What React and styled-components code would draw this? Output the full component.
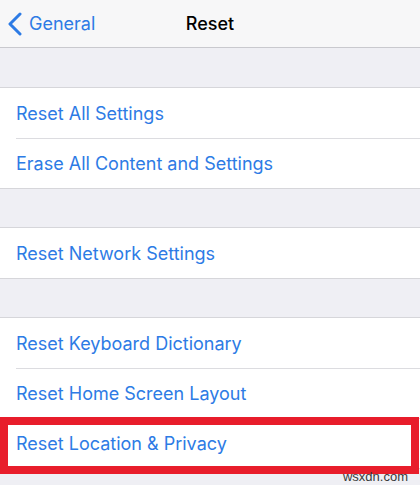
import React from "react";
import styled, { createGlobalStyle } from "styled-components";

const GlobalStyle = createGlobalStyle`
  body {
    margin: 0;
    background: #efeff4;
    font-family: "Inter", "Liberation Sans", sans-serif;
    -webkit-font-smoothing: antialiased;
  }
`;

const Screen = styled.div`
  width: 420px;
  height: 485px;
  overflow: hidden;
  background: #efeff4;
  display: flex;
  flex-direction: column;
  position: relative;
`;

const NavBar = styled.div`
  height: 47px;
  flex-shrink: 0;
  background: #f7f7f8;
  border-bottom: 1px solid #c9c9ce;
  display: grid;
  grid-template-columns: 1fr auto 1fr;
  align-items: center;
`;

const BackButton = styled.div`
  display: flex;
  align-items: center;
  gap: 7px;
  padding-left: 8px;
  color: #2d7be5;
  font-size: 18px;
`;

const Title = styled.div`
  font-size: 18px;
  font-weight: 500;
  color: #000;
`;

const Gap = styled.div`
  height: ${(p) => p.h}px;
  flex-shrink: 0;
`;

const Group = styled.div`
  background: #fff;
  border-top: 1px solid #d6d6da;
  border-bottom: 1px solid #d6d6da;
  flex-shrink: 0;
`;

const Row = styled.div`
  position: relative;
  height: 50px;
  margin-left: 16px;
  display: flex;
  align-items: center;
  color: #2d7be5;
  font-size: 18px;
  border-top: ${(p) => (p.first ? "none" : "1px solid #dcdce0")};
  box-sizing: border-box;

  ${(p) =>
    p.highlight &&
    `
    &::after {
      content: "";
      position: absolute;
      left: -16px;
      right: 1px;
      top: -2px;
      bottom: -6px;
      border: 8px solid #e81d2b;
      pointer-events: none;
    }
  `}
`;

const Watermark = styled.div`
  position: absolute;
  right: 12px;
  bottom: 1px;
  font-size: 13px;
  color: #3a3a3a;
  font-family: "Liberation Sans", sans-serif;
`;

const Chevron = () => (
  <svg width="14" height="24" viewBox="0 0 14 24">
    <path
      d="M12 2 L2 12 L12 22"
      fill="none"
      stroke="#2d7be5"
      strokeWidth="3"
      strokeLinecap="round"
      strokeLinejoin="round"
    />
  </svg>
);

const groups = [
  { gap: 39, items: ["Reset All Settings", "Erase All Content and Settings"] },
  { gap: 38, items: ["Reset Network Settings"] },
  {
    gap: 38,
    items: ["Reset Keyboard Dictionary", "Reset Home Screen Layout", "Reset Location & Privacy"],
  },
];

export default function App() {
  return (
    <Screen>
      <GlobalStyle />
      <NavBar>
        <BackButton>
          <Chevron />
          General
        </BackButton>
        <Title>Reset</Title>
        <div />
      </NavBar>
      {groups.map((g, gi) => (
        <React.Fragment key={gi}>
          <Gap h={g.gap} />
          <Group>
            {g.items.map((label, i) => (
              <Row
                key={label}
                first={i === 0}
                highlight={label === "Reset Location & Privacy"}
              >
                {label}
              </Row>
            ))}
          </Group>
        </React.Fragment>
      ))}
      <Watermark>wsxdn.com</Watermark>
    </Screen>
  );
}
